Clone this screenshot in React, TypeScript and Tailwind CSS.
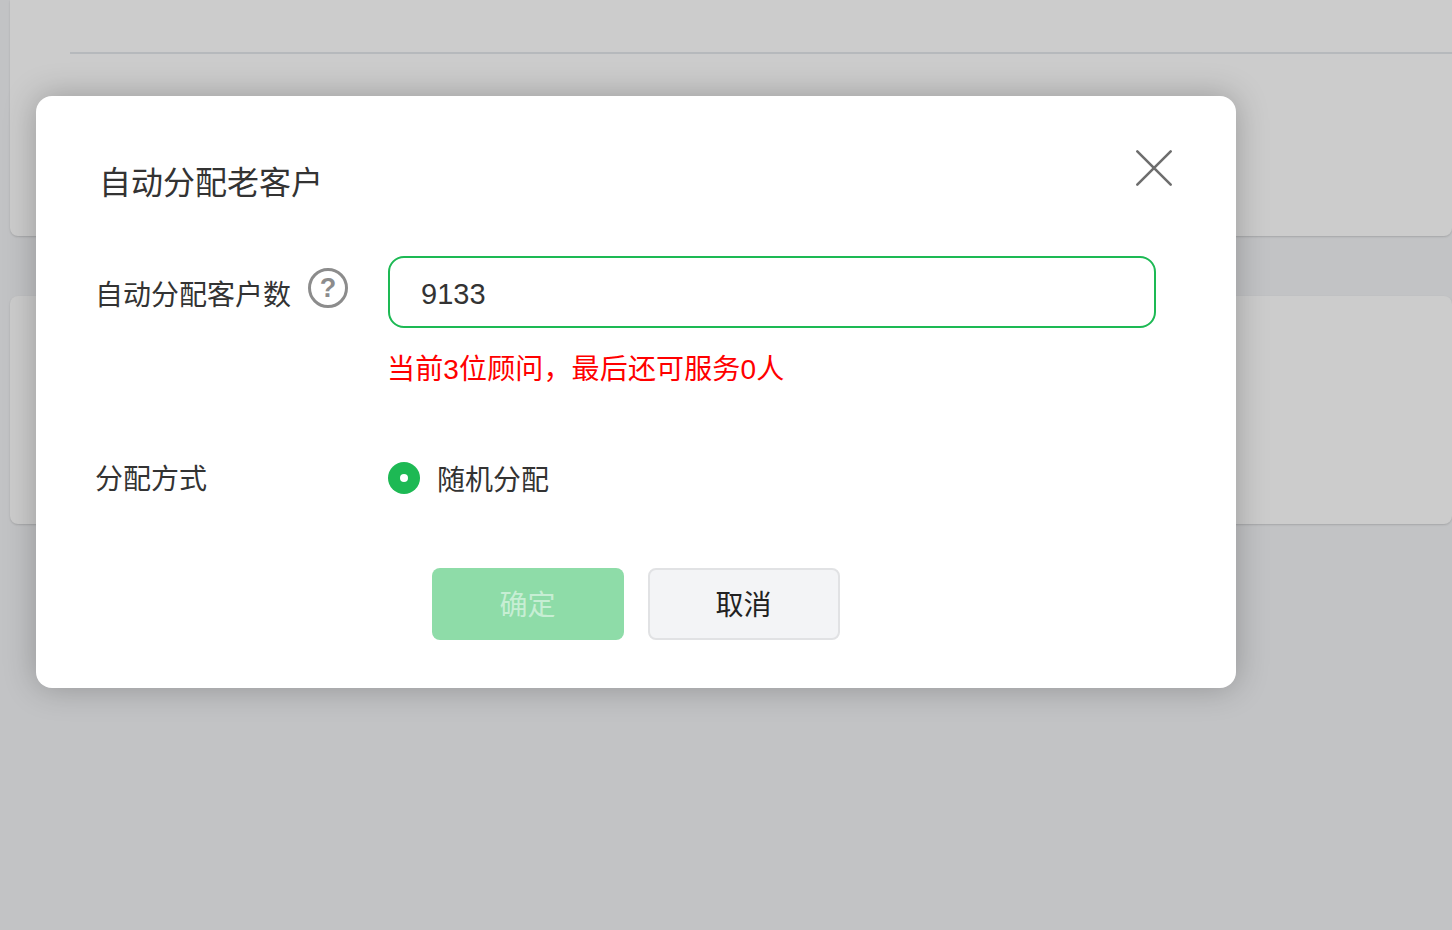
export default function App() {
  return (
    <div className="relative h-[930px] w-[1452px] overflow-hidden bg-[#c2c3c5] font-['Liberation_Sans','Noto_Sans_CJK_SC',sans-serif]">
      <div className="ml-[10px] flex flex-col gap-[60px]">
        <div className="h-[236px] rounded-b-[8px] bg-[#cccccc] pl-[60px] pt-[52px] shadow-[0_1px_2px_rgba(0,0,0,0.15)]">
          <div className="h-[2px] bg-[#b6b9bc]" />
        </div>
        <div className="h-[228px] rounded-[8px] bg-[#cccccc] shadow-[0_1px_2px_rgba(0,0,0,0.15)]" />
      </div>

      <div className="absolute left-[36px] top-[96px] h-[592px] w-[1200px] rounded-[16px] bg-white shadow-[0_0_32px_rgba(0,0,0,0.25)]">
        <div className="flex items-start justify-between pl-[63px] pr-[62px] pt-[54px]">
          <h2 className="mt-[1px] h-[64px] text-[32px] font-normal leading-[64px] text-[#333333]">自动分配老客户</h2>
          <svg width="40" height="40" viewBox="0 0 40 40" fill="none" className="-mt-[2px]">
            <path d="M3.3 3.3L36.7 36.7M36.7 3.3L3.3 36.7" stroke="#6e6e6e" strokeWidth="2.6" strokeLinecap="round" />
          </svg>
        </div>

        <div className="mt-[41px] flex items-start pl-[59px]">
          <div className="flex w-[293px] items-start">
            <span className="mt-[20px] text-[28px] leading-[40px] text-[#333333]">自动分配客户数</span>
            <svg width="40" height="40" viewBox="0 0 40 40" fill="none" className="ml-[17px] mt-[12px]">
              <circle cx="20" cy="20" r="18.5" stroke="#8c8c8c" strokeWidth="3" />
              <text x="20" y="29" textAnchor="middle" fontSize="27" fontWeight="700" fill="#8c8c8c" fontFamily="Liberation Sans">?</text>
            </svg>
          </div>
          <div className="flex flex-col">
            <div className="flex h-[72px] w-[768px] items-center rounded-[16px] border-2 border-[#1db954] pl-[31px] text-[29px] leading-[40px] text-[#333333]">
              <span className="mt-[4px]">9133</span>
            </div>
            <p className="-ml-[1px] mt-[22px] text-[28px] leading-[40px] tracking-[0.15px] text-[#ff0000]">当前3位顾问，最后还可服务0人</p>
          </div>
        </div>

        <div className="mt-[70px] flex items-center pl-[59px]">
          <span className="mb-[2px] w-[293px] text-[28px] leading-[40px] text-[#333333]">分配方式</span>
          <div className="flex items-center">
            <span className="mb-[6px] flex h-[32px] w-[32px] items-center justify-center rounded-full bg-[#1db954]">
              <span className="h-[8px] w-[8px] rounded-full bg-white" />
            </span>
            <span className="ml-[17px] text-[28px] leading-[40px] text-[#333333]">随机分配</span>
          </div>
        </div>

        <div className="mt-[66px] flex gap-[24px] pl-[396px]">
          <button className="flex h-[72px] w-[192px] items-center justify-center rounded-[8px] bg-[#8edca8] pr-[1px] pt-[4px] text-[28px] text-[#c7eed4]">确定</button>
          <button className="flex h-[72px] w-[192px] items-center justify-center rounded-[8px] border-2 border-[#e1e2e4] bg-[#f3f4f6] pr-[1px] pt-[4px] text-[28px] text-[#222222]">取消</button>
        </div>
      </div>
    </div>
  );
}
